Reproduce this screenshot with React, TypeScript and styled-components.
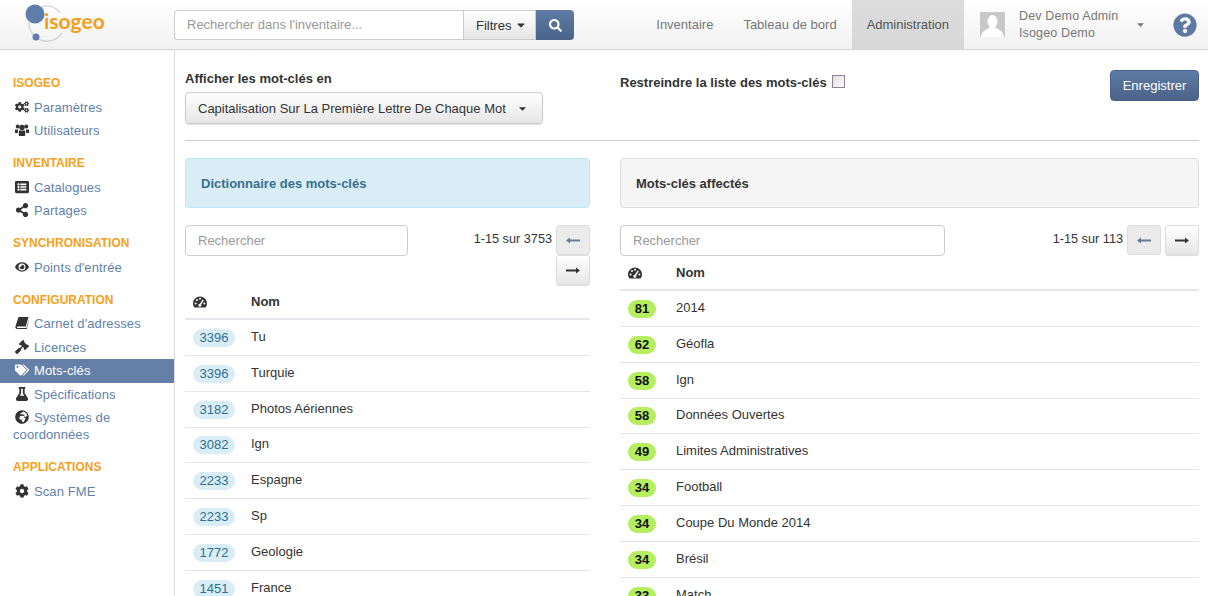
import React from 'react';
import styled, { createGlobalStyle } from 'styled-components';
import {
  FaCaretDown,
  FaCog,
  FaCogs,
  FaEye,
  FaFlask,
  FaGavel,
  FaGlobeAfrica,
  FaListAlt,
  FaQuestionCircle,
  FaSearch,
  FaShareAlt,
  FaTags,
} from 'react-icons/fa';

const GlobalStyle = createGlobalStyle`
  html, body {
    margin: 0;
    height: 596px;
    overflow: hidden;
    background: #fff;
    font-family: "Liberation Sans", Arial, sans-serif;
    font-size: 13px;
    color: #333;
  }
  * { box-sizing: border-box; }
`;

const Navbar = styled.header`
  height: 50px;
  display: flex;
  align-items: stretch;
  background: linear-gradient(to bottom, #fff, #f1f1f1);
  border-bottom: 1px solid #d8d8d8;
  box-shadow: 0 1px 2px rgba(0, 0, 0, 0.05);
`;

const Brand = styled.div`
  width: 174px;
  padding-left: 24px;
  flex: none;
`;

const SearchGroup = styled.div`
  display: flex;
  height: 30px;
  margin-top: 10px;
  width: 400px;
`;

const SearchInput = styled.div`
  width: 289px;
  border: 1px solid #ccc;
  border-right: 0;
  border-radius: 4px 0 0 4px;
  background: #fff;
  color: #999;
  padding-left: 12px;
  line-height: 28px;
`;

const FilterButton = styled.div`
  width: 73px;
  border: 1px solid #ccc;
  background: linear-gradient(to bottom, #fff, #e6e6e6);
  display: flex;
  align-items: center;
  gap: 4px;
  padding-left: 12px;
  color: #333;
`;

const SearchButton = styled.div`
  width: 38px;
  border-radius: 0 4px 4px 0;
  background: linear-gradient(to bottom, #5e7ca5, #4a6288);
  color: #fff;
  display: flex;
  align-items: center;
  justify-content: center;
  font-size: 13px;
`;

const NavLinks = styled.nav`
  display: flex;
  margin-left: auto;
`;

const NavLink = styled.div<{ $active?: boolean }>`
  padding: 0 15px;
  line-height: 49px;
  color: ${p => (p.$active ? '#555' : '#777')};
  background: ${p => (p.$active ? 'linear-gradient(to bottom, #dcdcdc, #d8d8d8)' : 'transparent')};
`;

const UserMenu = styled.div`
  display: flex;
  align-items: center;
  width: 244px;
  padding-left: 16px;
`;

const Avatar = styled.svg`
  width: 25px;
  height: 25px;
  flex: none;
`;

const UserText = styled.div`
  margin-left: 14px;
  width: 116px;
  font-size: 12.5px;
  line-height: 17px;
  letter-spacing: 0.15px;
  color: #777;
`;

const UserCaret = styled(FaCaretDown)`
  color: #777;
  font-size: 11px;
  flex: none;
`;

const HelpIcon = styled(FaQuestionCircle)`
  color: #5b79a3;
  font-size: 24px;
  margin-left: 27px;
  flex: none;
`;

const Body = styled.div`
  display: flex;
  height: 546px;
`;

const Sidebar = styled.aside`
  width: 175px;
  flex: none;
  border-right: 1px solid #ddd;
  padding-top: 22.2px;
`;

const SideGroup = styled.div`
  margin-bottom: 9.5px;
`;

const SideTitle = styled.div`
  font-size: 12px;
  font-weight: 700;
  color: #f7a11a;
  padding-left: 13px;
  line-height: 23.5px;
`;

const SideItem = styled.div<{ $active?: boolean }>`
  padding: 3.25px 13px;
  line-height: 17px;
  letter-spacing: 0.1px;
  color: ${p => (p.$active ? '#fff' : '#5f81ad')};
  background: ${p => (p.$active ? '#6480a8' : 'transparent')};

  svg {
    color: ${p => (p.$active ? '#fff' : '#333')};
    width: 14px;
    height: 14px;
    margin: 0 5px 0 2px;
    vertical-align: -2px;
  }
`;

const Main = styled.main`
  flex: 1;
  padding: 20px 9px 0 10px;
  overflow: hidden;
`;

const TopRow = styled.div`
  display: grid;
  grid-template-columns: 405px 1fr auto;
  column-gap: 30px;
  height: 71px;
  border-bottom: 1px solid #ccc;
`;

const FieldLabel = styled.div`
  font-weight: 700;
  line-height: 17px;
  margin-bottom: 5px;
`;

const Dropdown = styled.div`
  width: 358px;
  height: 32px;
  border: 1px solid #ccc;
  border-radius: 4px;
  background: linear-gradient(to bottom, #fff, #e6e6e6);
  box-shadow: 0 1px 1px rgba(0, 0, 0, 0.12);
  display: flex;
  align-items: center;
  justify-content: space-between;
  padding: 0 12px;
  white-space: nowrap;

  svg {
    font-size: 11px;
    margin-right: 2px;
  }
`;

const RestrictLabel = styled.div`
  font-weight: 700;
  display: flex;
  align-items: flex-start;
  gap: 5px;
  padding-top: 4px;
  line-height: 17px;
`;

const Checkbox = styled.span`
  width: 13px;
  height: 13px;
  margin-top: 1px;
  border: 1px solid #8f7f8f;
  background: linear-gradient(135deg, #ddd, #fff);
`;

const SaveButton = styled.div`
  width: 89px;
  height: 31px;
  border-radius: 4px;
  background: linear-gradient(to bottom, #5e7ca5, #4a6288);
  border: 1px solid #48608a;
  color: #fff;
  text-align: center;
  line-height: 29px;
`;

const Columns = styled.div`
  display: grid;
  grid-template-columns: 405px 579px;
  column-gap: 30px;
  margin-top: 17px;
`;

const Panel = styled.div<{ $info?: boolean }>`
  height: 50px;
  border: 1px solid ${p => (p.$info ? '#bce8f1' : '#ddd')};
  border-radius: 4px;
  background: ${p => (p.$info ? '#d9edf7' : '#f5f5f5')};
  color: ${p => (p.$info ? '#3a6f8f' : '#333')};
  font-weight: 700;
  padding-left: 15px;
  line-height: 49px;
`;

const Toolbar = styled.div<{ $wrap?: boolean }>`
  display: flex;
  justify-content: space-between;
  align-items: flex-start;
  margin-top: 17px;
  height: ${p => (p.$wrap ? '60px' : '31px')};
`;

const SearchBox = styled.div<{ $width: number }>`
  width: ${p => p.$width}px;
  height: 31px;
  border: 1px solid #ccc;
  border-radius: 4px;
  color: #999;
  padding-left: 12px;
  line-height: 29px;
`;

const Pager = styled.div<{ $width: number }>`
  width: ${p => p.$width}px;
  display: flex;
  flex-wrap: wrap;
  justify-content: flex-end;
  align-items: flex-start;
`;

const PagerText = styled.span`
  font-size: 12.7px;
  line-height: 17px;
  padding: 6px 4px 0 0;
`;

const PagerButton = styled.div<{ $disabled?: boolean }>`
  width: 34px;
  height: 30px;
  border: 1px solid #ddd;
  border-radius: 3px;
  display: flex;
  align-items: center;
  justify-content: center;
  color: ${p => (p.$disabled ? '#6b7d96' : '#333')};
  background: ${p => (p.$disabled ? '#ebebeb' : 'linear-gradient(to bottom, #fff, #e6e6e6)')};
  box-shadow: ${p => (p.$disabled ? 'none' : '0 1px 1px rgba(0, 0, 0, 0.15)')};
  margin-left: ${p => (p.$disabled ? '0' : '4px')};
`;

const WrappedButton = styled(PagerButton)`
  margin-left: 0;
`;

const TableHead = styled.div<{ $badgeCol: number }>`
  display: grid;
  grid-template-columns: ${p => p.$badgeCol}px 1fr;
  height: 35px;
  align-items: center;
  border-bottom: 2px solid #e6e6ec;
  font-weight: 700;

  svg {
    margin-left: 8px;
    width: 14px;
    height: 12px;
  }
`;

const Row = styled.div<{ $badgeCol: number }>`
  display: grid;
  grid-template-columns: ${p => p.$badgeCol}px 1fr;
  height: 35.85px;
  align-items: center;
  border-bottom: 1px solid #e6e6e6;
`;

const Name = styled.span`
  line-height: 17px;
  margin-top: -2px;
`;

const Count = styled.span<{ $assigned?: boolean }>`
  justify-self: start;
  margin-left: 8px;
  margin-top: 1px;
  height: 18px;
  line-height: 18px;
  border-radius: 9px;
  text-align: center;
  font-size: 13px;
  width: ${p => (p.$assigned ? '28px' : '42px')};
  font-weight: ${p => (p.$assigned ? 700 : 400)};
  color: ${p => (p.$assigned ? '#111' : '#31708f')};
  background: ${p => (p.$assigned ? '#b5ee5e' : '#d9edf7')};
`;

const dictionary: [number, string][] = [
  [3396, 'Tu'],
  [3396, 'Turquie'],
  [3182, 'Photos Aériennes'],
  [3082, 'Ign'],
  [2233, 'Espagne'],
  [2233, 'Sp'],
  [1772, 'Geologie'],
  [1451, 'France'],
];

const assigned: [number, string][] = [
  [81, '2014'],
  [62, 'Géofla'],
  [58, 'Ign'],
  [58, 'Données Ouvertes'],
  [49, 'Limites Administratives'],
  [34, 'Football'],
  [34, 'Coupe Du Monde 2014'],
  [34, 'Brésil'],
  [33, 'Match'],
];

const Logo = () => (
  <svg width="90" height="49" viewBox="0 0 90 49">
    <path d="M5 22 A18 18 0 0 0 38 33" fill="none" stroke="#d5d5d5" strokeWidth="1.5" />
    <path d="M18 6.4 A18 18 0 0 1 36 12.6" fill="none" stroke="#d5d5d5" strokeWidth="1.5" />
    <circle cx="11" cy="14" r="9.5" fill="#5f7cab" />
    <circle cx="12" cy="37" r="3.5" fill="#5f7cab" />
    <text x="20" y="29" fontFamily="Lato, sans-serif" fontSize="21" fontWeight="700" fill="#f59d1c">
      isogeo
    </text>
  </svg>
);

const UsersIcon = () => (
  <svg viewBox="0 0 14 14" fill="currentColor">
    <circle cx="2.7" cy="3.6" r="2" />
    <circle cx="11.3" cy="3.6" r="2" />
    <circle cx="7" cy="4.4" r="2.7" />
    <path d="M0 6.5 H3 L2.8 10 H0 Z" />
    <path d="M14 6.5 H11 L11.2 10 H14 Z" />
    <path d="M3.8 8 C3.8 7.2 5 7.4 7 7.4 C9 7.4 10.2 7.2 10.2 8 V12.6 C10.2 13 9.8 13 9.4 13 H4.6 C4.2 13 3.8 13 3.8 12.6 Z" />
  </svg>
);

const BookIcon = () => (
  <svg viewBox="0 0 14 14" fill="currentColor">
    <path d="M3.5 1 H13.5 L10.8 10.4 H2.8 C1.6 10.4 1.6 12 2.8 12 H11.4 L13.8 4 V4.8 L11.8 13 H2.5 C0.5 13 0 11.5 0.6 10 Z" />
  </svg>
);

const GaugeIcon = () => (
  <svg viewBox="0 0 14 12" fill="currentColor">
    <path d="M7 0.5 A7 7 0 0 0 0 7.5 C0 9 0.6 10.4 1.5 11.5 H12.5 C13.4 10.4 14 9 14 7.5 A7 7 0 0 0 7 0.5 Z" />
    <circle cx="2.6" cy="7.4" r="1" fill="#fff" />
    <circle cx="4" cy="4" r="1" fill="#fff" />
    <circle cx="7" cy="2.8" r="1" fill="#fff" />
    <circle cx="11.4" cy="7.4" r="1" fill="#fff" />
    <path d="M9.6 3.4 L10.8 4.2 L8.2 8.6 A1.5 1.5 0 1 1 6.9 7.8 Z" fill="#fff" />
  </svg>
);

const ArrowLeft = () => (
  <svg width="14" height="7" viewBox="0 0 14 7" fill="currentColor">
    <path d="M14 2.4 H4 V0.5 L0 3.5 L4 6.5 V4.6 H14 Z" />
  </svg>
);

const ArrowRight = () => (
  <svg width="14" height="7" viewBox="0 0 14 7" fill="currentColor">
    <path d="M0 2.4 H10 V0.5 L14 3.5 L10 6.5 V4.6 H0 Z" />
  </svg>
);

const App: React.FC = () => (
  <>
    <GlobalStyle />
    <Navbar>
      <Brand>
        <Logo />
      </Brand>
      <SearchGroup>
        <SearchInput>Rechercher dans l'inventaire...</SearchInput>
        <FilterButton>
          Filtres <FaCaretDown size={12} />
        </FilterButton>
        <SearchButton>
          <FaSearch />
        </SearchButton>
      </SearchGroup>
      <NavLinks>
        <NavLink>Inventaire</NavLink>
        <NavLink>Tableau de bord</NavLink>
        <NavLink $active>Administration</NavLink>
      </NavLinks>
      <UserMenu>
        <Avatar viewBox="0 0 25 25">
          <rect width="25" height="25" fill="#c8c8c8" />
          <ellipse cx="12.5" cy="9.5" rx="5" ry="6.5" fill="#fff" />
          <path d="M1 25 C2 18 8 17 10 15 H15 C17 17 23 18 24 25 Z" fill="#fff" />
        </Avatar>
        <UserText>
          Dev Demo Admin
          <br />
          Isogeo Demo
        </UserText>
        <UserCaret />
        <HelpIcon />
      </UserMenu>
    </Navbar>
    <Body>
      <Sidebar>
        <SideGroup>
          <SideTitle>ISOGEO</SideTitle>
          <SideItem><FaCogs />Paramètres</SideItem>
          <SideItem><UsersIcon />Utilisateurs</SideItem>
        </SideGroup>
        <SideGroup>
          <SideTitle>INVENTAIRE</SideTitle>
          <SideItem><FaListAlt />Catalogues</SideItem>
          <SideItem><FaShareAlt />Partages</SideItem>
        </SideGroup>
        <SideGroup>
          <SideTitle>SYNCHRONISATION</SideTitle>
          <SideItem><FaEye />Points d'entrée</SideItem>
        </SideGroup>
        <SideGroup>
          <SideTitle>CONFIGURATION</SideTitle>
          <SideItem><BookIcon />Carnet d'adresses</SideItem>
          <SideItem><FaGavel />Licences</SideItem>
          <SideItem $active><FaTags />Mots-clés</SideItem>
          <SideItem><FaFlask />Spécifications</SideItem>
          <SideItem><FaGlobeAfrica />Systèmes de coordonnées</SideItem>
        </SideGroup>
        <SideGroup>
          <SideTitle>APPLICATIONS</SideTitle>
          <SideItem><FaCog />Scan FME</SideItem>
        </SideGroup>
      </Sidebar>
      <Main>
        <TopRow>
          <div>
            <FieldLabel>Afficher les mot-clés en</FieldLabel>
            <Dropdown>
              Capitalisation Sur La Première Lettre De Chaque Mot
              <FaCaretDown />
            </Dropdown>
          </div>
          <RestrictLabel>
            Restreindre la liste des mots-clés <Checkbox />
          </RestrictLabel>
          <SaveButton>Enregistrer</SaveButton>
        </TopRow>
        <Columns>
          <section>
            <Panel $info>Dictionnaire des mots-clés</Panel>
            <Toolbar $wrap>
              <SearchBox $width={223}>Rechercher</SearchBox>
              <Pager $width={130}>
                <PagerText>1-15 sur 3753</PagerText>
                <PagerButton $disabled><ArrowLeft /></PagerButton>
                <WrappedButton><ArrowRight /></WrappedButton>
              </Pager>
            </Toolbar>
            <TableHead $badgeCol={66}>
              <GaugeIcon />
              <span>Nom</span>
            </TableHead>
            {dictionary.map(([count, name], i) => (
              <Row $badgeCol={66} key={i}>
                <Count>{count}</Count>
                <Name>{name}</Name>
              </Row>
            ))}
          </section>
          <section>
            <Panel>Mots-clés affectés</Panel>
            <Toolbar>
              <SearchBox $width={325}>Rechercher</SearchBox>
              <Pager $width={160}>
                <PagerText>1-15 sur 113</PagerText>
                <PagerButton $disabled><ArrowLeft /></PagerButton>
                <PagerButton><ArrowRight /></PagerButton>
              </Pager>
            </Toolbar>
            <TableHead $badgeCol={56}>
              <GaugeIcon />
              <span>Nom</span>
            </TableHead>
            {assigned.map(([count, name], i) => (
              <Row $badgeCol={56} key={i}>
                <Count $assigned>{count}</Count>
                <Name>{name}</Name>
              </Row>
            ))}
          </section>
        </Columns>
      </Main>
    </Body>
  </>
);

export default App;
